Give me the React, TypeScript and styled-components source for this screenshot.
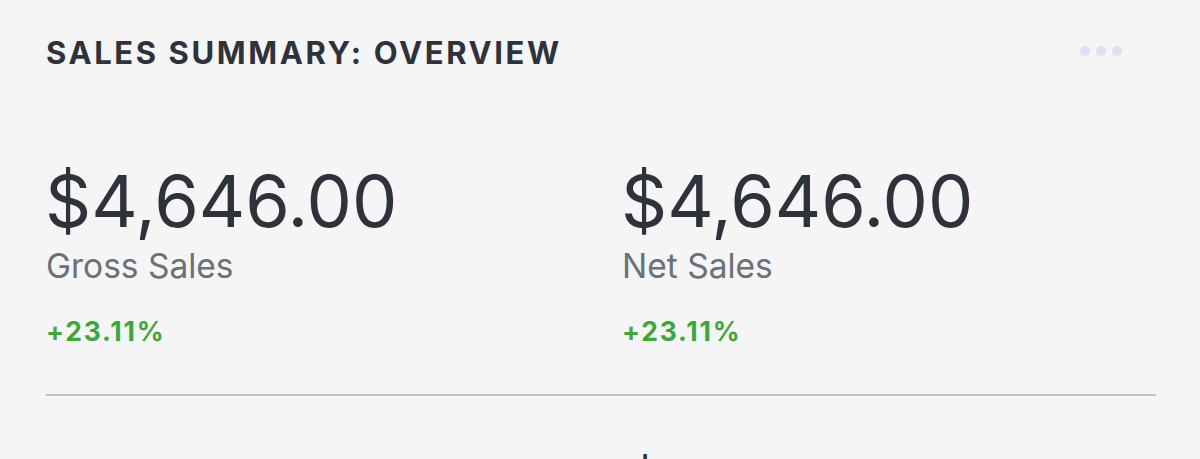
import React from "react";
import styled, { createGlobalStyle } from "styled-components";

const GlobalStyle = createGlobalStyle`
  html, body {
    margin: 0;
    padding: 0;
    background: #f5f5f6;
    font-family: Inter, "Liberation Sans", Arial, sans-serif;
    overflow: hidden;
  }
`;

const Card = styled.div`
  width: 1200px;
  height: 459px;
  box-sizing: border-box;
  padding: 35px 44px 0 46px;
  overflow: hidden;
`;

const Header = styled.div`
  display: flex;
  align-items: center;
  justify-content: space-between;
`;

const Title = styled.h2`
  margin: 0;
  font-size: 31px;
  font-weight: 700;
  color: #2e333b;
  line-height: 36px;
  letter-spacing: 2.6px;
`;

const Dots = styled.div`
  display: flex;
  gap: 6px;
  margin-right: 34px;
  margin-top: -4px;
`;

const Dot = styled.span`
  width: 10px;
  height: 10px;
  border-radius: 50%;
  background: #dce1f5;
`;

const Stats = styled.div`
  display: grid;
  grid-template-columns: 576px 1fr;
  margin-top: 94px;
`;

const Stat = styled.div`
  display: flex;
  flex-direction: column;
`;

const Amount = styled.div`
  font-size: 72px;
  font-weight: 400;
  color: #2e333b;
  line-height: 72px;
  margin-left: -1px;
`;

const Label = styled.div`
  font-size: 33.5px;
  color: #6b7178;
  line-height: 40px;
  margin-top: 9px;
`;

const Change = styled.div<{ $up?: boolean }>`
  font-size: 26.5px;
  font-weight: 700;
  color: ${(p) => (p.$up ? "#3aa83a" : "#d9403a")};
  margin-top: 30px;
  line-height: 30px;
  letter-spacing: 1.8px;
`;

const Divider = styled.hr`
  border: none;
  height: 2px;
  background: #c2c2c4;
  margin: 48px 0 0 0;
  width: 1110px;
`;

const NextRow = styled.div`
  text-align: center;
  font-size: 40px;
  color: #2e333b;
  margin-top: 48px;
  padding-left: 88px;
`;

const stats = [
  { amount: "$4,646.00", label: "Gross Sales", change: "+23.11%" },
  { amount: "$4,646.00", label: "Net Sales", change: "+23.11%" },
];

export default function App() {
  return (
    <>
      <GlobalStyle />
      <Card>
        <Header>
          <Title>SALES SUMMARY: OVERVIEW</Title>
          <Dots>
            <Dot />
            <Dot />
            <Dot />
          </Dots>
        </Header>
        <Stats>
          {stats.map((s) => (
            <Stat key={s.label}>
              <Amount>{s.amount}</Amount>
              <Label>{s.label}</Label>
              <Change $up>{s.change}</Change>
            </Stat>
          ))}
        </Stats>
        <Divider />
        <NextRow>l</NextRow>
      </Card>
    </>
  );
}
